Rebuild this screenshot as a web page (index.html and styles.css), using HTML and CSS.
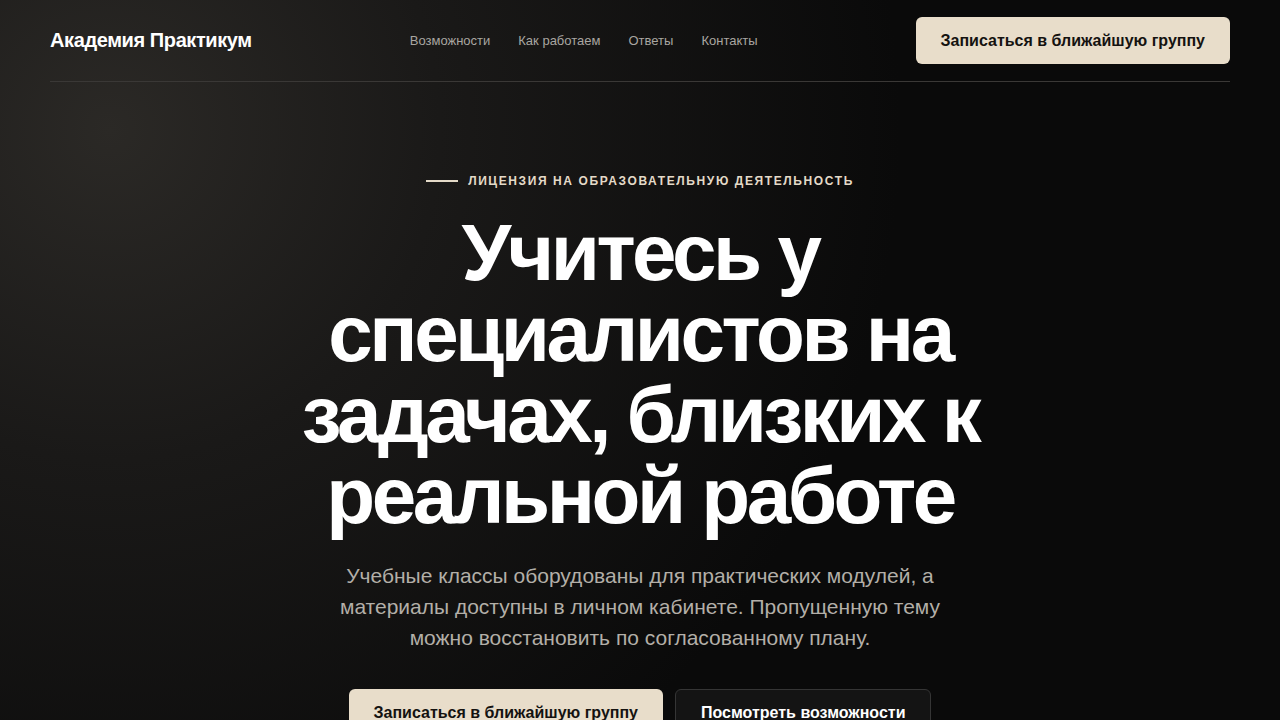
FILE: index.html
```html
<!DOCTYPE html>
<html lang="ru">

<head>
    <meta charset="UTF-8">
    <meta name="viewport" content="width=device-width, initial-scale=1.0">
    <title>Академия Практикум</title>
    <link rel="stylesheet" href="styles.css">
</head>

<body>
    <div class="page">
        <header class="topbar">
            <a class="logo" href="#">Академия Практикум</a>
            <nav class="mainNav">
                <a href="#">Возможности</a>
                <a href="#">Как работаем</a>
                <a href="#">Ответы</a>
                <a href="#">Контакты</a>
            </nav>
            <a class="btn btnLight headerBtn" href="#">Записаться в ближайшую группу</a>
        </header>

        <section class="hero">
            <div class="eyebrow">
                <span class="eyebrowLine"></span>
                <span>Лицензия на образовательную деятельность</span>
            </div>
            <h1>Учитесь у специалистов на задачах, близких к реальной работе</h1>
            <p class="lead">Учебные классы оборудованы для практических модулей, а материалы доступны в личном кабинете. Пропущенную тему можно восстановить по согласованному плану.</p>
            <div class="actions">
                <a class="btn btnLight" href="#">Записаться в ближайшую группу</a>
                <a class="btn btnDark" href="#">Посмотреть возможности</a>
            </div>
        </section>
    </div>
</body>

</html>
```

FILE: styles.css
```css
body {
    margin: 0;
    min-height: 100vh;
    background-color: #090909;
    background-image: radial-gradient(circle at 110px 130px, #2b2926 0%, #1a1918 25%, #0a0a0a 60%);
    color: #fff;
    font-family: "Liberation Sans", Arial, sans-serif;
}

a {
    color: inherit;
    text-decoration: none;
}

.page {
    width: 1180px;
    margin: 0 auto;
}

/* Header */
.topbar {
    display: flex;
    align-items: center;
    padding: 17px 0 17px;
    border-bottom: 1px solid #3a3836;
}

.logo {
    font-size: 20px;
    font-weight: bold;
    letter-spacing: -0.4px;
}

.mainNav {
    display: flex;
    gap: 28px;
    font-size: 13px;
    color: #a9a6a1;
    margin-left: 158px;
}

.headerBtn {
    margin-left: auto;
}

.btn {
    display: inline-flex;
    align-items: center;
    justify-content: center;
    height: 47px;
    padding: 0 25px;
    border-radius: 6px;
    font-size: 16px;
    font-weight: bold;
    box-sizing: border-box;
}

.btnLight {
    background-color: #e8ddca;
    color: #141210;
}

.btnDark {
    background-color: #141414;
    color: #fff;
    border: 1px solid #353535;
}

/* Hero */
.hero {
    display: flex;
    flex-direction: column;
    align-items: center;
    text-align: center;
    padding-top: 92px;
}

.eyebrow {
    display: flex;
    align-items: center;
    gap: 10px;
    font-size: 12px;
    font-weight: bold;
    letter-spacing: 1.6px;
    text-transform: uppercase;
    color: #e4dac8;
}

.eyebrowLine {
    width: 32px;
    height: 2px;
    background-color: #e4dac8;
}

h1 {
    max-width: 720px;
    margin: 24px 0 0;
    font-size: 80px;
    line-height: 81px;
    letter-spacing: -3.5px;
    font-weight: bold;
}

.lead {
    max-width: 620px;
    margin: 24px 0 0;
    font-size: 21px;
    line-height: 31px;
    color: #b3afa8;
}

.actions {
    display: flex;
    gap: 12px;
    margin-top: 36px;
}
```
